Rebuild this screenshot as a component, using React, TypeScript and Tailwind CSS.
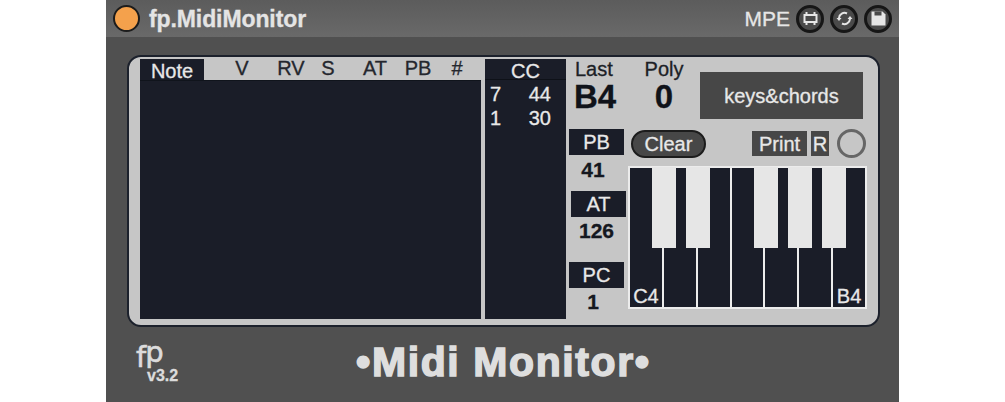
const sans = "font-['Liberation_Sans',Arial,sans-serif]";

const headers = [
  { label: 'V', ml: 'ml-[23px]' },
  { label: 'RV', ml: 'ml-[19px]' },
  { label: 'S', ml: 'ml-[7px]' },
  { label: 'AT', ml: 'ml-[17px]' },
  { label: 'PB', ml: 'ml-[13px]' },
  { label: '#', ml: 'ml-[9px]' },
];

const blackKeys = [
  'left-[24px]',
  'left-[58px]',
  'left-[126px]',
  'left-[160px]',
  'left-[194px]',
];

function RoundIcon({ children }: { children: React.ReactNode }) {
  return (
    <div className="flex h-[28px] w-[28px] items-center justify-center rounded-full border-[3px] border-[#161616] bg-[#4a4a4a]">
      <svg width="17" height="17" viewBox="0 0 17 17" fill="none" stroke="#e6e6e6" strokeWidth="2">
        {children}
      </svg>
    </div>
  );
}

function Label({ text, className }: { text: string; className: string }) {
  return (
    <div className={`flex h-[26px] w-[55px] items-center justify-center bg-[#1a1d28] text-[20px] text-[#e8e8e8] ${className}`}>
      {text}
    </div>
  );
}

function Keyboard() {
  return (
    <div className="relative ml-[2px] mt-[8px] flex h-[143px] w-[239px] gap-[2px] bg-[#ececec] p-[2px]">
      {['C4', '', '', '', '', '', 'B4'].map((name, i) => (
        <div key={i} className="flex flex-1 items-end justify-center bg-[#1a1d28] pb-[1px] text-[20px] leading-[20px] text-[#e8e8e8]">
          {name}
        </div>
      ))}
      {blackKeys.map((left) => (
        <div key={left} className={`absolute top-[1px] h-[81px] w-[24px] bg-[#e6e6e6] ${left}`} />
      ))}
    </div>
  );
}

export default function App() {
  return (
    <div className={`flex h-[402px] w-[1005px] justify-center bg-white [-webkit-text-stroke:0.3px] ${sans}`}>
      <div className="flex h-full w-[793px] flex-col bg-[#505050]">
        <div className="flex h-[37px] shrink-0 items-center bg-gradient-to-b from-[#5c5c5c] to-[#696969] pl-[7px] pr-[7px]">
          <div className="h-[27px] w-[27px] rounded-full border-2 border-[#1c1c1c] bg-[#f4a14c]" />
          <span className="ml-[9px] mt-[1px] text-[23px] font-bold tracking-[-0.1px] text-[#e4e4e4]">fp.MidiMonitor</span>
          <span className="ml-auto mr-[6px] mt-[1px] text-[21px] text-[#e6e6e6]">MPE</span>
          <div className="flex gap-[6px]">
            <RoundIcon>
              <path d="M2.500 5h12v7h-12z" />
              <path d="M4.500 2v3M12.500 2v3M4.500 12v3M12.500 12v3" />
            </RoundIcon>
            <RoundIcon>
              <path d="M3 8a5.500 5.500 0 0 1 8-4.500" />
              <path d="M14 9a5.500 5.500 0 0 1-8 4.500" />
              <path d="M0.500 8h5L3 11zM11.500 9h5L14 6z" fill="#e6e6e6" strokeWidth="0" />
            </RoundIcon>
            <RoundIcon>
              <path d="M1.500 1.500h11l3 3v11h-14z" fill="#e6e6e6" strokeWidth="0" />
              <path d="M4.500 1.500h7v4h-7z" fill="#4a4a4a" strokeWidth="0" />
            </RoundIcon>
          </div>
        </div>

        <div className="ml-[21px] mt-[18px] flex h-[272px] w-[753px] shrink-0 rounded-[14px] border-2 border-[#1c212c] bg-[#c6c6c6] pl-[11px] pt-[2px]">
          <div className="flex h-[260px] w-[341px] flex-col">
            <div className="flex h-[21px]">
              <div className="flex w-[64px] items-center justify-center bg-[#1a1d28] pt-[3px] text-[20px] text-[#e8e8e8]">Note</div>
              <div className="flex text-[20px] leading-[19px] text-[#24272e]">
                {headers.map((h) => (
                  <span key={h.label} className={`${h.ml} w-[30px] text-center`}>{h.label}</span>
                ))}
              </div>
            </div>
            <div className="flex-1 border-t border-[#10141c] bg-[#1a1d28]" />
          </div>

          <div className="ml-[4px] flex h-[260px] w-[81px] flex-col bg-[#1a1d28] text-[20px] text-[#e8e8e8]">
            <div className="flex h-[21px] items-center justify-center border-b border-[#0e1118] pt-[3px]">CC</div>
            <div className="flex justify-between pl-[5px] pr-[15px] pt-[2px] leading-[24px]">
              <span>7</span>
              <span>44</span>
            </div>
            <div className="flex justify-between pl-[5px] pr-[15px] leading-[24px]">
              <span>1</span>
              <span>30</span>
            </div>
          </div>

          <div className="flex flex-col">
            <div className="flex h-[70px]">
              <div className="ml-[8px] flex w-[50px] flex-col text-[#1c1f26]">
                <span className="ml-[1px] text-[20px] leading-[20px]">Last</span>
                <span className="text-[33px] font-bold leading-[36px] text-[#10131a]">B4</span>
              </div>
              <div className="ml-[18px] flex w-[44px] flex-col items-center text-[#1c1f26]">
                <span className="text-[20px] leading-[20px]">Poly</span>
                <span className="text-[33px] font-bold leading-[36px] text-[#10131a]">0</span>
              </div>
              <div className="ml-[14px] mt-[13px] flex h-[47px] w-[163px] items-center justify-center bg-[#474747] text-[20px] text-[#e8e8e8]">
                keys&amp;chords
              </div>
            </div>

            <div className="flex">
              <div className="flex w-[60px] flex-col pl-[3px] text-[#15181f]">
                <Label text="PB" className="" />
                <span className="h-[36px] w-[48px] pt-[1px] text-center text-[21px] font-bold leading-[28px]">41</span>
                <Label text="AT" className="ml-[2px]" />
                <span className="h-[45px] w-[55px] text-center text-[21px] font-bold leading-[28px]">126</span>
                <Label text="PC" className="" />
                <span className="w-[48px] text-center text-[21px] font-bold leading-[28px]">1</span>
              </div>

              <div className="flex flex-col">
                <div className="flex h-[29px] items-center">
                  <div className="ml-[5px] flex h-[28px] w-[75px] items-center justify-center rounded-full border-2 border-[#1c1c1c] bg-[#474747] text-[20px] text-[#e8e8e8]">
                    Clear
                  </div>
                  <div className="ml-[46px] flex h-[25px] w-[55px] items-center justify-center bg-[#474747] text-[20px] text-[#e8e8e8]">
                    Print
                  </div>
                  <div className="ml-[4px] flex h-[25px] w-[18px] items-center justify-center bg-[#474747] text-[20px] text-[#e8e8e8]">
                    R
                  </div>
                  <div className="ml-[8px] h-[29px] w-[29px] rounded-full border-[3px] border-[#666666]" />
                </div>
                <Keyboard />
              </div>
            </div>
          </div>
        </div>

        <div className="flex flex-1 items-start pl-[30px]">
          <div className="mt-[18px] flex w-[48px] flex-col text-[#dcdcdc]">
            <span className="flex h-[24px] font-['DejaVu_Sans',sans-serif] text-[29px] leading-[24px] tracking-[-1px] [-webkit-text-stroke:0.6px]">
              f<span className="-translate-y-[5px]">p</span>
            </span>
            <span className="ml-[11px] text-[16px] font-bold leading-[13px]">v3.2</span>
          </div>
          <div className="ml-[172px] mt-[11px] text-[41px] font-bold leading-[48px] tracking-[1.6px] text-[#dedede] [-webkit-text-stroke:1.5px_#dedede]">
            •Midi Monitor•
          </div>
        </div>
      </div>
    </div>
  );
}
